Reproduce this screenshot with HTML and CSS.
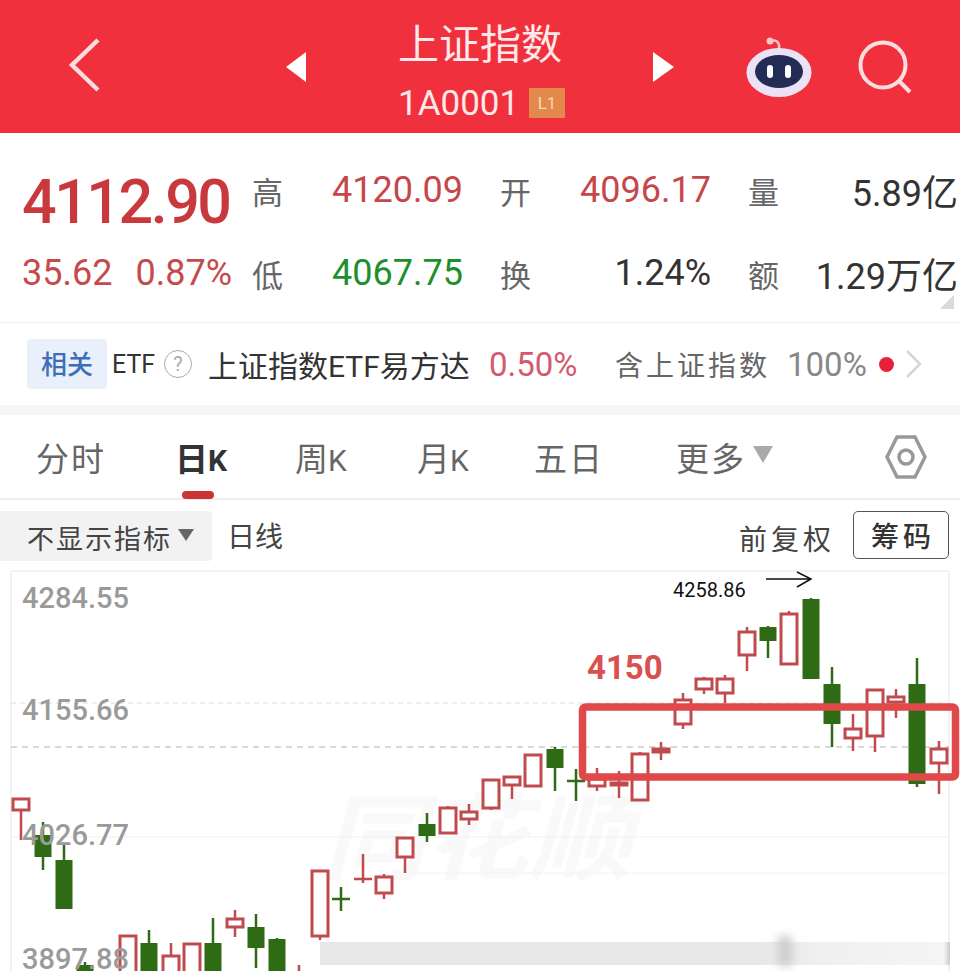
FILE: index.html
```html
<!DOCTYPE html>
<html lang="zh-CN">
<head>
    <meta charset="UTF-8">
    <meta name="viewport" content="width=device-width, initial-scale=1.0">
    <title>上证指数</title>
    <link rel="stylesheet" href="styles.css">
</head>
<body>
    <header class="top-bar">
        <svg class="back" viewBox="0 0 34 56"><path d="M30 3 L4 28 L30 53" /></svg>
        <span class="arrow-left"></span>
        <div class="title-block">
            <div class="title">上证指数</div>
            <div class="code-row"><span class="code">1A0001</span><span class="badge">L1</span></div>
        </div>
        <span class="arrow-right"></span>
        <svg class="robot" viewBox="0 0 66 66">
            <path d="M25 8 C31 6 34 10 33 17" fill="none" stroke="#f6c6cc" stroke-width="2.5"/>
            <circle cx="24" cy="8" r="3.5" fill="#f6c6cc"/>
            <ellipse cx="33" cy="39.5" rx="32.5" ry="24.5" fill="#ebe3f5"/>
            <ellipse cx="33" cy="38.5" rx="24" ry="16.5" fill="#232c54"/>
            <rect x="21" y="32" width="6" height="13" rx="3" fill="#fff"/>
            <rect x="39" y="32" width="6" height="13" rx="3" fill="#fff"/>
        </svg>
        <svg class="search" viewBox="0 0 54 54"><circle cx="25" cy="25" r="22.5"/><path d="M41 41 L52 52"/></svg>
    </header>

    <section class="quote">
        <div class="price-box">
            <div class="price">4112.90</div>
            <div class="change"><span>35.62</span><span>0.87%</span></div>
        </div>
        <div class="stats">
            <span class="label">高</span><span class="val up">4120.09</span>
            <span class="label">开</span><span class="val up">4096.17</span>
            <span class="label">量</span><span class="val">5.89亿</span>
            <span class="label">低</span><span class="val down">4067.75</span>
            <span class="label">换</span><span class="val">1.24%</span>
            <span class="label">额</span><span class="val">1.29万亿</span>
        </div>
        <span class="corner"></span>
    </section>

    <section class="etf-row">
        <span class="chip">相关</span>
        <span class="etf">ETF</span>
        <span class="help">?</span>
        <span class="etf-name">上证指数ETF易方达</span>
        <span class="etf-pct">0.50%</span>
        <span class="etf-hold">含上证指数</span>
        <span class="etf-share">100%</span>
        <span class="dot"></span>
        <svg class="more" viewBox="0 0 18 30"><path d="M2 2 L15 15 L2 28"/></svg>
    </section>

    <nav class="tabs">
        <span class="tab t1">分时</span>
        <span class="tab t2 active">日<small>K</small></span>
        <span class="tab t3">周<small>K</small></span>
        <span class="tab t4">月<small>K</small></span>
        <span class="tab t5">五日</span>
        <span class="tab t6">更多</span>
        <span class="tri-down big"></span>
        <svg class="hex" viewBox="0 0 42 44"><path d="M12 2 H30 L40 22 L30 42 H12 L2 22 Z"/><circle cx="21" cy="22" r="7"/></svg>
    </nav>

    <section class="toolbar">
        <div class="indicator"><span>不显示指标</span><i class="tri-down small"></i></div>
        <span class="line-name">日线</span>
        <span class="adjust">前复权</span>
        <button class="chips-btn">筹码</button>
    </section>

    <div class="chart-wrap">
        <svg id="chart" class="chart" viewBox="0 0 960 401"></svg>
        <div class="strip"></div>
    </div>

    <script src="chart.js"></script>
</body>
</html>
```

FILE: styles.css
```css
* {
    box-sizing: border-box;
}
body {
    margin: 0;
    width: 960px;
    height: 971px;
    overflow: hidden;
    background: #fff;
    font-family: Roboto, "Noto Sans CJK SC", sans-serif;
    color: #333;
}

/* header */
.top-bar {
    height: 133px;
    background: #f1303e;
    display: flex;
    align-items: center;
    color: #fde9e9;
}
.back {
    width: 34px;
    height: 56px;
    margin-left: 68px;
    margin-top: -4px;
    fill: none;
    stroke: #fbdcdc;
    stroke-width: 4.5;
}
.arrow-left {
    margin-left: 184px;
    border-top: 15px solid transparent;
    border-bottom: 15px solid transparent;
    border-right: 20px solid #fff;
}
.arrow-right {
    border-top: 15px solid transparent;
    border-bottom: 15px solid transparent;
    border-left: 21px solid #fff;
}
.title-block {
    width: 167px;
    align-self: stretch;
    padding-top: 20px;
    margin: 0 88px 0 92px;
}
.title {
    font-size: 41px;
    line-height: 50px;
    white-space: nowrap;
}
.code-row {
    display: flex;
    align-items: center;
    margin-top: 18px;
    height: 30px;
}
.code {
    font-size: 35px;
    width: 131px;
}
.badge {
    width: 36px;
    height: 30px;
    background: #e3894c;
    color: #f5d9b8;
    font-size: 17px;
    line-height: 30px;
    text-align: center;
}
.robot {
    width: 66px;
    height: 66px;
    margin-left: 72px;
    margin-top: -2px;
}
.search {
    width: 54px;
    height: 54px;
    margin-left: 46px;
    fill: none;
    stroke: #fddede;
    stroke-width: 4;
}

/* quote */
.quote {
    height: 190px;
    padding: 33px 0 0 22px;
    display: flex;
    position: relative;
    border-bottom: 1px solid #f2f2f2;
}
.price-box {
    width: 230px;
}
.price {
    font-size: 61px;
    font-weight: 500;
    line-height: 72px;
    letter-spacing: -2.5px;
    color: #c9383c;
}
.change {
    display: flex;
    justify-content: space-between;
    width: 210px;
    font-size: 36px;
    line-height: 42px;
    margin-top: 14px;
    color: #c54a4c;
}
.stats {
    display: grid;
    grid-template-columns: 30px 144px 30px 144px 30px 143px;
    column-gap: 37px;
    grid-auto-rows: 42px;
    row-gap: 41px;
    align-items: center;
    padding-top: 3px;
}
.label {
    font-size: 31px;
    color: #666;
}
.val {
    font-size: 36px;
    text-align: right;
    white-space: nowrap;
    color: #333;
}
.val.up {
    color: #c5474a;
}
.val.down {
    color: #1d8f2c;
}
.corner {
    position: absolute;
    right: 6px;
    bottom: 13px;
    border-left: 14px solid transparent;
    border-bottom: 14px solid #d9d9d9;
}

/* etf row */
.etf-row {
    height: 92px;
    border-bottom: 10px solid #f6f6f6;
    display: flex;
    align-items: center;
    padding-left: 27px;
}
.chip {
    width: 80px;
    height: 50px;
    background: #e9f0fb;
    color: #3d6fb8;
    font-size: 26px;
    font-weight: 500;
    line-height: 52px;
    text-align: center;
    border-radius: 4px;
}
.etf {
    font-size: 25px;
    margin-left: 5px;
    width: 44px;
}
.help {
    width: 28px;
    height: 28px;
    margin-left: 8px;
    border: 1.5px solid #aaa;
    border-radius: 50%;
    color: #aaa;
    font-size: 20px;
    line-height: 26px;
    text-align: center;
}
.etf-name {
    font-size: 30px;
    margin-left: 16px;
    width: 263px;
    white-space: nowrap;
    color: #333;
}
.etf-pct {
    font-size: 33px;
    margin-left: 18px;
    width: 90px;
    color: #d4596b;
}
.etf-hold {
    font-size: 28px;
    letter-spacing: 3px;
    margin-left: 36px;
    width: 172px;
    white-space: nowrap;
    color: #666;
}
.etf-share {
    font-size: 33px;
    width: 82px;
    color: #888;
}
.dot {
    width: 15px;
    height: 15px;
    margin-left: 10px;
    border-radius: 50%;
    background: #e8203a;
}
.more {
    width: 18px;
    height: 30px;
    margin-left: 11px;
    fill: none;
    stroke: #d5d5d5;
    stroke-width: 2.5;
}

/* tabs */
.tabs {
    height: 85px;
    border-bottom: 2px solid #eee;
    display: flex;
    align-items: center;
    position: relative;
}
.tab {
    font-size: 33px;
    color: #666;
    white-space: nowrap;
    letter-spacing: 2px;
}
.tab small {
    font-size: 30px;
    letter-spacing: 0;
}
.t1 { margin-left: 36px; width: 68px; }
.t2 { margin-left: 71px; width: 52px; letter-spacing: 0; }
.t3 { margin-left: 68px; width: 50px; letter-spacing: 0; }
.t4 { margin-left: 72px; width: 49px; letter-spacing: 0; }
.t5 { margin-left: 68px; width: 66px; }
.t6 { margin-left: 76px; width: 69px; }
.tab.active {
    color: #333;
    font-weight: 700;
}
.tab.active::after {
    content: "";
    position: absolute;
    left: 182px;
    top: 76px;
    width: 32px;
    height: 8px;
    border-radius: 4px;
    background: #cc3336;
}
.tri-down.big {
    margin-left: 8px;
    margin-top: -4px;
    border-left: 10px solid transparent;
    border-right: 10px solid transparent;
    border-top: 17px solid #aaa;
}
.hex {
    width: 42px;
    height: 44px;
    margin-left: 112px;
    fill: none;
    stroke: #999;
    stroke-width: 3.5;
}

/* toolbar */
.toolbar {
    height: 70px;
    display: flex;
    align-items: center;
}
.indicator {
    width: 212px;
    height: 50px;
    margin-top: 2px;
    background: #f2f2f2;
    border-radius: 0 4px 4px 0;
    padding: 2px 0 0 27px;
    display: flex;
    align-items: center;
    font-size: 27px;
    letter-spacing: 2px;
    color: #444;
}
.tri-down.small {
    margin-left: 6px;
    margin-top: -4px;
    border-left: 8px solid transparent;
    border-right: 8px solid transparent;
    border-top: 12px solid #666;
}
.line-name {
    font-size: 28px;
    margin-left: 15px;
    color: #444;
}
.adjust {
    font-size: 28px;
    letter-spacing: 4px;
    margin-left: auto;
    margin-top: 6px;
    color: #444;
}
.chips-btn {
    width: 96px;
    height: 48px;
    margin: 0 11px 0 18px;
    background: #fff;
    border: 1px solid #555;
    border-radius: 5px;
    font-family: inherit;
    font-size: 28px;
    font-weight: 500;
    letter-spacing: 4px;
    color: #333;
    padding: 0 0 0 4px;
}

/* chart */
.chart-wrap {
    position: relative;
    height: 401px;
}
.chart {
    display: block;
    width: 960px;
    height: 401px;
}
.strip {
    position: absolute;
    left: 320px;
    top: 372px;
    width: 630px;
    height: 23px;
    background: linear-gradient(90deg, #e8e8e8 70%, #f0f0f0 80%, #f5f5f5 99%, #c9c9c9 100%);
}
.strip::after {
    content: "";
    position: absolute;
    left: 458px;
    top: -6px;
    width: 14px;
    height: 30px;
    background: #cdcdcd;
    filter: blur(5px);
}
.axis-label {
    font-size: 29px;
    font-weight: 500;
    fill: #9a9a9a;
}
.mark-label {
    font-size: 20px;
    fill: #111;
}
.note-label {
    font-size: 33px;
    font-weight: 700;
    fill: #d9514f;
}
.logo-mark {
    font-size: 94px;
    font-weight: 700;
    font-style: italic;
    fill: #f9f9f9;
}
```

FILE: chart.js
```javascript
// x, wick top, wick bottom, body top, body bottom, up? (page coordinates)
const candles = [
    [21, 798, 840, 798, 811, 1], [43, 822, 870, 835, 857, 0], [64, 843, 909, 860, 909, 0],
    [85, 962, 980, 965, 980, 0], [128, 935, 980, 935, 980, 1], [149, 930, 980, 943, 980, 0],
    [171, 943, 980, 955, 980, 1], [192, 943, 980, 943, 980, 1], [213, 918, 980, 943, 980, 0],
    [235, 910, 937, 918, 928, 1], [256, 914, 968, 927, 948, 0], [277, 938, 980, 939, 980, 0],
    [299, 965, 980, 975, 980, 1], [320, 870, 940, 870, 937, 1], [341, 887, 911, 898, 900, 0],
    [363, 854, 883, 878, 880, 1], [384, 874, 899, 876, 894, 1], [405, 837, 873, 837, 858, 1],
    [427, 813, 842, 824, 836, 0], [448, 806, 834, 807, 834, 1], [469, 804, 825, 811, 820, 1],
    [491, 779, 810, 779, 809, 1], [512, 776, 799, 776, 786, 1], [533, 754, 787, 754, 787, 1],
    [555, 747, 791, 749, 768, 0], [576, 769, 801, 780, 782, 0], [597, 768, 791, 778, 787, 1],
    [619, 771, 798, 782, 786, 1], [640, 752, 801, 753, 801, 1], [661, 742, 760, 748, 753, 1],
    [683, 693, 729, 699, 725, 1], [704, 677, 694, 678, 690, 1], [725, 675, 703, 678, 694, 1],
    [747, 627, 671, 631, 656, 1], [768, 626, 658, 627, 641, 0], [789, 611, 665, 613, 665, 1],
    [811, 598, 679, 599, 679, 0], [832, 667, 747, 684, 724, 0], [853, 714, 751, 728, 739, 1],
    [875, 689, 752, 689, 737, 1], [896, 689, 718, 696, 703, 1], [917, 658, 787, 684, 784, 0],
    [939, 741, 794, 748, 764, 1]
];
const TOP = 570;
const svg = document.getElementById('chart');
let out = '';

function line(x1, y1, x2, y2, color, w, dash) {
    const d = dash ? ` stroke-dasharray="${dash}"` : '';
    return `<line x1="${x1}" y1="${y1 - TOP}" x2="${x2}" y2="${y2 - TOP}" stroke="${color}" stroke-width="${w}"${d}/>`;
}

// watermark and frame
out += `<text class="logo-mark" x="322" y="${872 - TOP}" textLength="310" lengthAdjust="spacingAndGlyphs">同花顺</text>`;
out += line(11, 571, 949, 571, '#eeeeee', 1.5);
out += line(11, 571, 11, 971, '#eeeeee', 1.5);
out += line(949, 571, 949, 971, '#eeeeee', 1.5);
out += line(11, 703, 949, 703, '#dddddd', 1, '5 4');
out += line(11, 837, 949, 837, '#f0f0f0', 1);
out += line(405, 873, 949, 873, '#f3f3f3', 1);
out += line(11, 747, 949, 747, '#b5b5a8', 1, '6 5');

// candles
candles.forEach(([x, wt, wb, bt, bb, up]) => {
    const color = up ? '#c04a4d' : '#2f6a14';
    out += line(x, wt, x, wb, color, 2.5);
    if (bb - bt <= 2) {
        out += line(x - 9, bt + 1, x + 9, bt + 1, color, 2.5);
    } else if (up) {
        out += `<rect x="${x - 8}" y="${bt - TOP + 1}" width="16" height="${bb - bt - 2}" fill="#fff" stroke="${color}" stroke-width="3"/>`;
    } else {
        out += `<rect x="${x - 8.5}" y="${bt - TOP}" width="17" height="${bb - bt}" fill="${color}"/>`;
    }
});

// axis labels
[['4284.55', 608], ['4155.66', 720], ['4026.77', 845], ['3897.88', 969]].forEach(([t, y]) => {
    out += `<text class="axis-label" x="22" y="${y - TOP}">${t}</text>`;
});

// hand drawn marks
out += `<rect x="582.5" y="${707 - TOP}" width="373" height="70" rx="3" fill="none" stroke="#e0484a" stroke-width="7.5"/>`;
out += `<text class="note-label" x="587" y="${679 - TOP}">4150</text>`;
out += `<text class="mark-label" x="673" y="${597 - TOP}">4258.86</text>`;
out += `<path d="M766 ${579 - TOP} H810 M797 ${572 - TOP} L811 ${579 - TOP} L797 ${587 - TOP}" fill="none" stroke="#111" stroke-width="1.5"/>`;

svg.innerHTML = out;
```
